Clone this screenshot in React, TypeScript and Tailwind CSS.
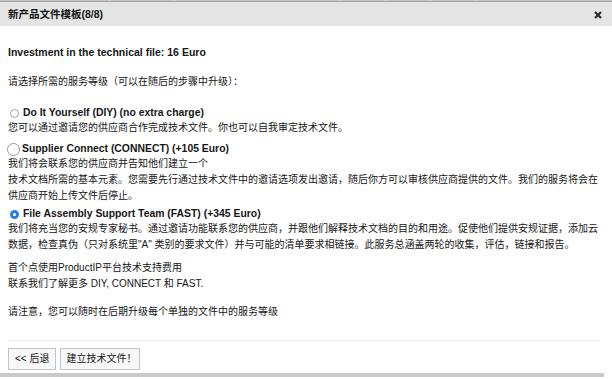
import React from "react";

function Radio({ kind }: { kind: "small" | "big" | "on" }) {
  if (kind === "big") {
    return (
      <span className="inline-block w-[13px] h-[13px] rounded-full border border-[#9a9a9a] bg-white mr-[2px] ml-[-1px] align-middle shrink-0" />
    );
  }
  if (kind === "on") {
    return (
      <span className="inline-flex w-[9px] h-[9px] rounded-full bg-[#2a7de1] items-center justify-center mr-[4px] ml-[2px] shrink-0">
        <span className="w-[3px] h-[3px] rounded-full bg-white" />
      </span>
    );
  }
  return (
    <span className="inline-block w-[9px] h-[9px] rounded-full border border-[#a0a0a0] bg-white mr-[4px] ml-[2px] shrink-0" />
  );
}

export default function App() {
  const font = {
    fontFamily: '"Liberation Sans", "Noto Sans CJK SC", Arial, sans-serif',
  };
  return (
    <div
      className="w-[612px] h-[379px] bg-white text-[#161616] overflow-hidden flex flex-col"
      style={font}
    >
      {/* top strip */}
      <div className="h-[2px] flex bg-[#c4c4c4] border-b border-[#a6a6a6]">
        <div className="w-[110px] border-r border-[#e0e0e0]" />
        <div className="w-[65px] border-r border-[#e0e0e0]" />
        <div className="w-[166px] border-r border-[#e0e0e0]" />
        <div className="w-[45px] border-r border-[#e0e0e0]" />
        <div className="w-[45px] border-r border-[#e0e0e0]" />
        <div className="w-[45px] border-r border-[#e0e0e0]" />
        <div className="flex-1" />
      </div>
      {/* header */}
      <div className="h-[24px] bg-[#e5e5e5] flex items-center justify-between pl-[8px] pr-[10px]">
        <span className="text-[10.5px] font-bold leading-none">新产品文件模板(8/8)</span>
        <svg width="8" height="8" viewBox="0 0 8 8" className="mt-[1px]">
          <path d="M1 1 L7 7 M7 1 L1 7" stroke="#2a2a2a" strokeWidth="2.2" strokeLinecap="butt" />
        </svg>
      </div>
      {/* body */}
      <div className="flex-1 flex flex-col px-[8px] text-[10px] leading-[16px]">
        <div className="mt-[18px] font-bold text-[10.5px] whitespace-nowrap">
          Investment in the technical file: 16 Euro
        </div>
        <div className="mt-[14px] whitespace-nowrap">请选择所需的服务等级（可以在随后的步骤中升级）：</div>

        <div className="mt-[16px] flex items-center font-bold text-[10.4px] leading-[14px] whitespace-nowrap">
          <Radio kind="small" />
          <span>Do It Yourself (DIY) (no extra charge)</span>
        </div>
        <div className="whitespace-nowrap">您可以通过邀请您的供应商合作完成技术文件。你也可以自我审定技术文件。</div>

        <div className="mt-[6px] flex items-center font-bold text-[10.4px] leading-[14px] whitespace-nowrap">
          <Radio kind="big" />
          <span>Supplier Connect (CONNECT) (+105 Euro)</span>
        </div>
        <div className="whitespace-nowrap">我们将会联系您的供应商并告知他们建立一个</div>
        <div className="whitespace-nowrap">
          技术文档所需的基本元素。您需要先行通过技术文件中的邀请选项发出邀请，随后你方可以审核供应商提供的文件。我们的服务将会在
        </div>
        <div className="whitespace-nowrap">供应商开始上传文件后停止。</div>

        <div className="mt-[3px] flex items-center font-bold text-[10.4px] leading-[14px] whitespace-nowrap">
          <Radio kind="on" />
          <span>File Assembly Support Team (FAST) (+345 Euro)</span>
        </div>
        <div className="whitespace-nowrap">
          我们将充当您的安规专家秘书。通过邀请功能联系您的供应商，并跟他们解释技术文档的目的和用途。促使他们提供安规证据，添加云
        </div>
        <div className="whitespace-nowrap">
          数据，检查真伪（只对系统里"A" 类别的要求文件）并与可能的清单要求相链接。此服务总涵盖两轮的收集，评估，链接和报告。
        </div>

        <div className="mt-[7px] whitespace-nowrap">首个点使用ProductIP平台技术支持费用</div>
        <div className="whitespace-nowrap">联系我们了解更多 DIY, CONNECT 和 FAST.</div>

        <div className="mt-[12px] whitespace-nowrap">请注意，您可以随时在后期升级每个单独的文件中的服务等级</div>

        <div className="mt-[20px] h-px bg-[#ebebeb] w-[591px]" />

        <div className="mt-[7px] flex gap-[4px]">
          <button className="h-[22px] px-[6px] border border-[#c4c4c4] bg-[#f8f8f8] text-[10px] leading-none">
            &lt;&lt; 后退
          </button>
          <button className="h-[22px] pl-[5px] pr-[3px] border border-[#c4c4c4] bg-[#f8f8f8] text-[10px] leading-none">
            建立技术文件！
          </button>
        </div>
      </div>
      <div className="h-[4px] bg-[#c9c9c9] w-[604px] mb-[2px]" />
    </div>
  );
}
